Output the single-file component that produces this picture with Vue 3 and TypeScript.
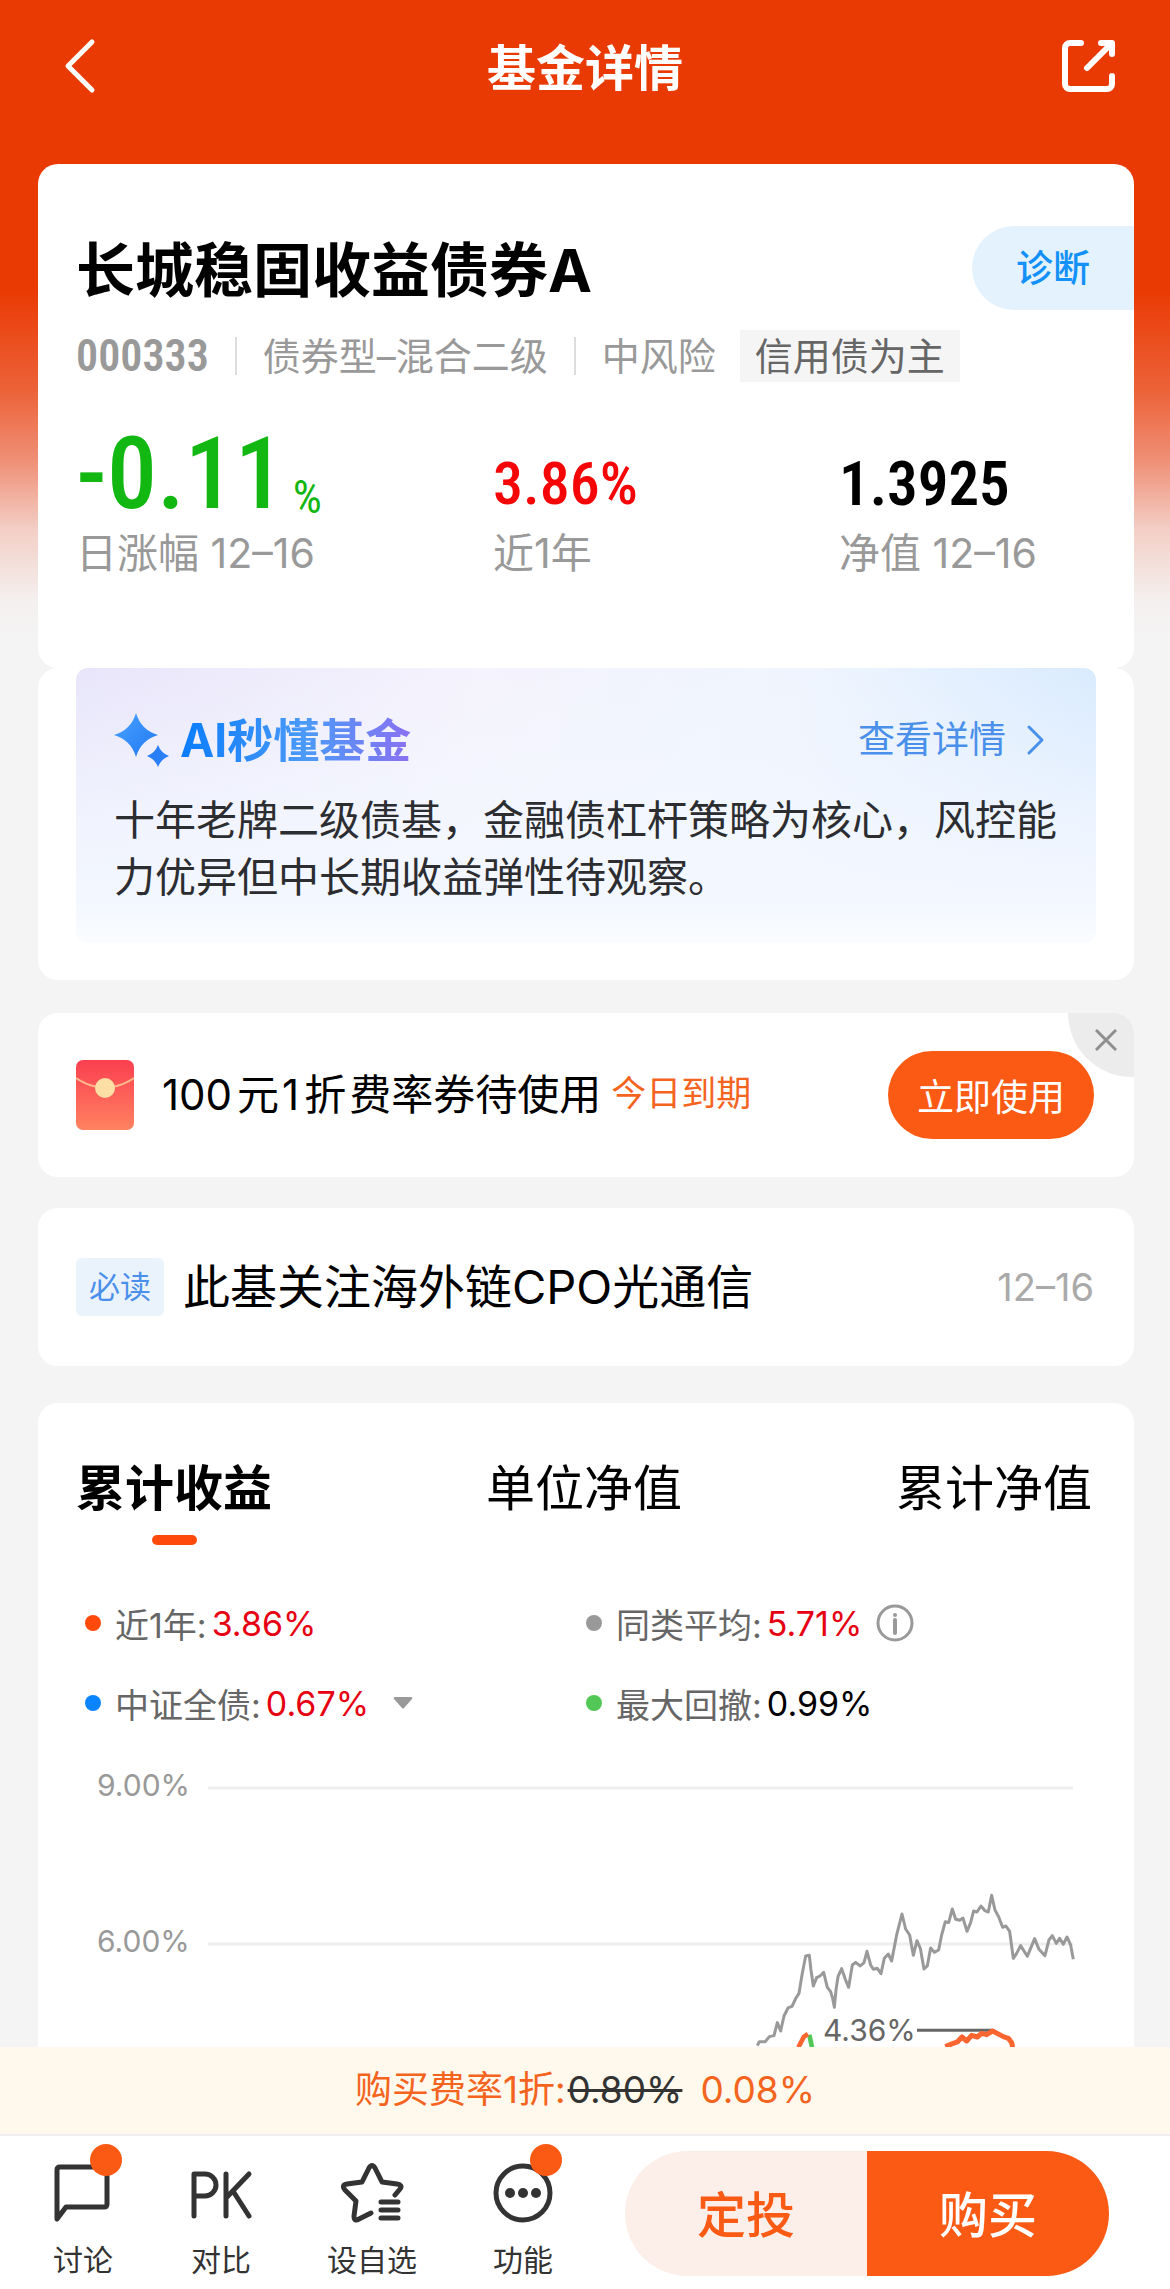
<script setup lang="ts">
import { ref } from 'vue'

interface Stat { value: string; unit?: string; label: string; tone: string }
interface Tool { id: string; label: string; badge: boolean }

const stats: Stat[] = [
  { value: '-0.11', unit: '%', label: '日涨幅 12–16', tone: 'down' },
  { value: '3.86%', label: '近1年', tone: 'up' },
  { value: '1.3925', label: '净值 12–16', tone: 'flat' },
]

const tabs = ['累计收益', '单位净值', '累计净值']
const active = ref(0)
const couponOpen = ref(true)

const tools: Tool[] = [
  { id: 'chat', label: '讨论', badge: true },
  { id: 'pk', label: '对比', badge: false },
  { id: 'star', label: '设自选', badge: false },
  { id: 'more', label: '功能', badge: true },
]

const average =
  '172,557 178,545 196,545 208,530 222,527 232,488 242,513 252,468 264,444 276,439 288,414 297,400 306,345 317,288 328,286 333,330 340,378 350,353 360,348 371,337 382,382 392,395 398,415 403,442 408,390 414,350 425,326 436,358 446,382 457,315 467,307 481,318 492,308 501,274 512,315 520,328 532,325 543,341 553,295 565,282 575,303 590,225 606,162 617,207 629,225 640,286 651,242 661,265 672,327 682,318 692,264 703,277 716,270 725,225 736,185 746,188 757,147 767,178 779,181 789,174 801,214 812,188 821,153 831,156 843,138 855,152 865,156 875,106 885,150 896,170 908,202 918,198 929,214 940,295 950,280 962,257 982,289 1004,236 1017,268 1035,287 1047,240 1057,227 1069,250 1079,235 1090,253 1101,231 1112,255 1120,298'
const fund =
  '736,560 760,550 772,546 786,531 800,543 815,526 832,531 845,520 860,524 878,513 893,521 910,530 925,535 935,548 938,562'
</script>

<template>
  <div class="page">
    <header class="top">
      <button class="icon-btn" aria-label="返回">
        <svg width="56" height="56" viewBox="0 0 56 56"><path d="M40 4 16 28l24 24" fill="none" stroke="#fff" stroke-width="5" stroke-linecap="round" stroke-linejoin="round" /></svg>
      </button>
      <h1>基金详情</h1>
      <button class="icon-btn" aria-label="分享">
        <svg width="56" height="56" viewBox="0 0 56 56" fill="none" stroke="#fff" stroke-width="6" stroke-linecap="round" stroke-linejoin="round"><path d="M19 5H8a5 5 0 0 0-5 5v36a5 5 0 0 0 5 5h37a5 5 0 0 0 5-5v-8M39 5h11v11M49 6 25 30" /></svg>
      </button>
    </header>

    <main>
      <section class="card hero">
        <div class="title-row">
          <h2>长城稳固收益债券A</h2>
          <button class="diagnose">诊断</button>
        </div>
        <div class="meta">
          <span class="code">000333</span><i></i><span>债券型–混合二级</span><i></i><span>中风险</span><span class="tag">信用债为主</span>
        </div>
        <div class="stats">
          <div v-for="s in stats" :key="s.label" :class="['stat', s.tone]">
            <p class="num">{{ s.value }}<small v-if="s.unit">{{ s.unit }}</small></p>
            <p class="cap">{{ s.label }}</p>
          </div>
        </div>
      </section>

      <section class="card ai">
        <div class="ai-box">
          <div class="ai-head">
            <svg width="56" height="56" viewBox="0 0 56 56">
              <defs><linearGradient id="spark" x1="0" y1="0" x2="1" y2="1"><stop offset="0" stop-color="#4aa3ff" /><stop offset="1" stop-color="#2077f5" /></linearGradient></defs>
              <path d="M22 1Q27 18 44 23 27 28 22 45 17 28 0 23 17 18 22 1Z" fill="url(#spark)" />
              <path d="M44 33q3 8 11 11-8 3-11 11-3-8-11-11 8-3 11-11Z" fill="#2a7ff6" />
            </svg>
            <h3>AI秒懂基金</h3>
            <a href="#detail">查看详情<svg width="20" height="32" viewBox="0 0 20 32"><path d="m3 3 13 13L3 29" fill="none" stroke="#4a90ea" stroke-width="3" stroke-linecap="round" stroke-linejoin="round" /></svg></a>
          </div>
          <p>十年老牌二级债基，金融债杠杆策略为核心，风控能力优异但中长期收益弹性待观察。</p>
        </div>
      </section>

      <section v-if="couponOpen" class="card coupon">
        <svg width="58" height="70" viewBox="0 0 58 70">
          <defs><linearGradient id="env" x1="0" y1="0" x2="0" y2="1"><stop offset="0" stop-color="#fb3f50" /><stop offset="1" stop-color="#ff8261" /></linearGradient></defs>
          <rect width="58" height="70" rx="7" fill="url(#env)" />
          <path d="M0 18q10 7 22 9h14q12-2 22-9" fill="none" stroke="#fdb98b" stroke-width="2" />
          <circle cx="29" cy="28" r="10" fill="#fddfa5" />
        </svg>
        <p>100<b>元</b>1<b>折</b>费率券待使用</p>
        <em>今日到期</em>
        <button class="use">立即使用</button>
        <button class="close" aria-label="关闭" @click="couponOpen = false">
          <svg width="22" height="22" viewBox="0 0 22 22"><path d="m1 1 20 20M21 1 1 21" stroke="#8f8f8f" stroke-width="3" /></svg>
        </button>
      </section>

      <section class="card notice">
        <span class="must">必读</span>
        <a href="#notice">此基关注海外链CPO光通信</a>
        <time>12–16</time>
      </section>

      <section class="card chart">
        <nav class="tabs">
          <button v-for="(t, n) in tabs" :key="t" :class="{ on: n === active }" @click="active = n">{{ t }}</button>
        </nav>
        <div class="legend">
          <div class="item"><i class="d-orange"></i>近1年:<b>3.86%</b></div>
          <div class="item"><i class="d-gray"></i>同类平均:<b>5.71%</b>
            <svg class="info" width="38" height="38" viewBox="0 0 38 38"><circle cx="19" cy="19" r="17" fill="none" stroke="#999" stroke-width="3" /><circle cx="19" cy="11" r="2" fill="#999" /><path d="M19 16v13" stroke="#999" stroke-width="4" stroke-linecap="round" /></svg>
          </div>
          <div class="item"><i class="d-blue"></i>中证全债:<b>0.67%</b>
            <svg class="caret" width="20" height="14" viewBox="0 0 20 14"><path d="M2 1h16q2 0 1 2l-8 9q-1 1-2 0L1 3Q0 1 2 1Z" fill="#999" /></svg>
          </div>
          <div class="item"><i class="d-green"></i>最大回撤:<b class="black">0.99%</b></div>
        </div>
        <svg class="plot" viewBox="0 0 1020 282">
          <g stroke="#eee" stroke-width="3"><path d="M132 23H997M132 179H997" /></g>
          <g class="axis"><text x="21" y="31">9.00%</text><text x="21" y="187">6.00%</text></g>
          <g transform="translate(624 95) scale(.3333)" fill="none" stroke-linejoin="round">
            <polyline :points="average" stroke="#999" stroke-width="9" />
            <path d="M328 524 336 562" stroke="#52c755" stroke-width="14" />
            <path d="M295 562 312 530 324 522" stroke="#fb6530" stroke-width="14" />
            <path d="M651 511H878" stroke="#666" stroke-width="9" />
            <polyline :points="fund" stroke="#fb6530" stroke-width="15" />
          </g>
          <text class="peak" x="747" y="276">4.36%</text>
        </svg>
      </section>
    </main>

    <footer>
      <p class="fee">购买费率1折:<del>0.80%</del><span>0.08%</span></p>
      <div class="bar">
        <div class="tools">
          <button v-for="t in tools" :key="t.id" :class="['tool', t.id]">
            <span class="glyph">
              <svg width="64" height="72" viewBox="0 0 64 72" fill="none" stroke="#333" stroke-width="5" stroke-linecap="round" stroke-linejoin="round">
                <path v-if="t.id === 'chat'" d="M6 60V11q0-3 3-3h44q3 0 3 3v34q0 3-3 3H15L6 60Z" />
                <path v-else-if="t.id === 'pk'" d="M5 57V15h11a11 11 0 0 1 0 22H5M37 15v42M60 15 38 38M44 32 60 57" />
                <g v-else-if="t.id === 'star'">
                  <path d="M55 36 60 30Q63 26 57 25L42 23 35 9Q32 4 29 9L22 23 7 25Q1 26 5 31L16 42 14 57Q14 63 19 60L31 54" />
                  <path d="M41 43h17M41 51h17M41 59h17" />
                </g>
                <g v-else><circle cx="32" cy="34" r="27" /><g fill="#333" stroke="none"><circle cx="19" cy="34" r="5" /><circle cx="32" cy="34" r="5" /><circle cx="45" cy="34" r="5" /></g></g>
              </svg>
              <i v-if="t.badge"></i>
            </span>
            {{ t.label }}
          </button>
        </div>
        <div class="actions">
          <button class="plan">定投</button>
          <button class="buy">购买</button>
        </div>
      </div>
    </footer>
  </div>
</template>

<style>
body { margin: 0; background: #f4f4f4; }
</style>

<style scoped>
* { box-sizing: border-box; }
.page {
  min-height: 100vh;
  font-family: Inter, "Noto Sans CJK SC", sans-serif;
  color: #000;
  background: linear-gradient(#ea3a04 0, #ea3a04 290px, #ec6238 390px, #ef8f76 460px, #f3cfc6 530px, #f4f0ef 600px, #f4f4f4 640px) no-repeat #f4f4f4;
  display: flex;
  flex-direction: column;
}
h1, h2, h3, p { margin: 0; font-weight: 400; }
button { border: 0; padding: 0; margin: 0; background: none; font: inherit; color: inherit; }
a { color: inherit; text-decoration: none; }
svg { display: block; flex: none; }
i, em { font-style: normal; }

.top { height: 132px; margin-bottom: 32px; padding: 0 52px; display: flex; align-items: center; justify-content: space-between; }
h1 { padding-top: 6px; font-size: 49px; line-height: 72px; font-weight: 700; color: #fff; }

main { padding: 0 36px 0 38px; flex: 1; }
.card { background: #fff; border-radius: 20px; }

.hero { height: 504px; padding: 62px 0 0 38px; }
.title-row { display: flex; justify-content: space-between; }
h2 { font-size: 59px; line-height: 90px; font-weight: 700; }
.diagnose { width: 162px; height: 84px; padding-bottom: 4px; border-radius: 42px 0 0 42px; background: #e3f2fd; color: #1491f8; font-size: 37px; font-weight: 500; }
.meta { display: flex; align-items: center; height: 52px; margin-top: 14px; font-size: 38px; line-height: 52px; color: #999; }
.meta i { width: 2px; height: 38px; margin: 0 26px; background: #ddd; }
.code { font-family: "Roboto Condensed", Roboto, sans-serif; font-weight: 600; font-size: 44px; }
.tag { margin-left: 24px; padding: 0 15px; background: #f5f5f5; color: #666; }
.stats { display: grid; grid-template-columns: 417fr 346fr 295fr; margin-top: 48px; }
.num { height: 90px; display: flex; align-items: flex-end; font-family: "Roboto Condensed", "Liberation Sans Narrow", Roboto, sans-serif; font-weight: 600; font-size: 61px; line-height: 72px; }
.down .num { font-size: 100px; line-height: 92px; font-weight: 500; color: #12b712; }
.num small { font-size: 46px; line-height: 46px; font-weight: 400; margin-left: 8px; }
.up .num { color: #f50505; font-size: 60px; font-weight: 500; }
.cap { font-size: 41px; line-height: 56px; margin-top: 5px; color: #999; }

.ai { padding: 0 38px 37px; }
.ai-box { border-radius: 12px; padding: 40px 36px 36px 38px; min-height: 275px;
  background: linear-gradient(to bottom, rgba(243,247,255,0) 0, rgba(243,247,255,0.8) 60%, #f3f7ff 85%, #fafcff 100%), linear-gradient(100deg, #e8e5fa 0, #f5f3fd 38%, #eff5fe 68%, #d6e9fe 100%); }
.ai-head { display: flex; align-items: center; height: 64px; }
h3 { margin-left: 10px; font-size: 46px; line-height: 64px; font-weight: 700; color: transparent; background: linear-gradient(90deg, #0a7cfb, #4b9af8 55%, #8a70f2); background-clip: text; }
.ai-head a { margin-left: auto; margin-right: 14px; display: flex; align-items: center; gap: 20px; font-size: 37px; line-height: 52px; color: #4a90ea; }
.ai-box p { margin-top: 20px; font-size: 41px; line-height: 57px; color: #2c2d31; }

.coupon { position: relative; margin-top: 33px; height: 164px; padding: 0 40px 0 38px; display: flex; align-items: center; overflow: hidden; }
.coupon p { margin-left: 28px; font-size: 42px; line-height: 60px; }
.coupon p b { font-weight: 400; margin-left: 5px; margin-right: 3px; }
.coupon em { margin-left: 10px; padding-bottom: 4px; font-size: 35px; line-height: 52px; color: #f5641e; }
.use { margin-left: auto; width: 206px; height: 88px; border-radius: 44px; background: #fa5a14; color: #fff; font-size: 37px; }
.close { position: absolute; top: 0; right: 0; width: 66px; height: 64px; border-radius: 0 0 0 64px; background: #ececec; display: flex; align-items: center; justify-content: center; padding-left: 10px; padding-bottom: 10px; }

.notice { margin-top: 31px; height: 158px; padding: 0 40px 0 38px; display: flex; align-items: center; }
.must { width: 88px; height: 58px; border-radius: 6px; background: #eaf2fc; color: #4a90ea; font-size: 31px; line-height: 58px; text-align: center; }
.notice a { margin-left: 19px; font-size: 47px; line-height: 68px; }
.notice time { margin-left: auto; font-size: 38px; color: #aaa; }

.chart { margin-top: 37px; padding: 48px 38px 0; border-radius: 20px 20px 0 0; }
.tabs { display: flex; justify-content: space-between; padding-right: 4px; }
.tabs button { font-size: 49px; line-height: 76px; height: 94px; display: flex; flex-direction: column; align-items: center; }
.tabs .on { font-weight: 700; }
.tabs .on::after { content: ""; width: 45px; height: 10px; border-radius: 5px; background: #ff4a0c; margin-top: 8px; }
.legend { display: grid; grid-template-columns: 501px 1fr; margin-top: 38px; padding-left: 9px; }
.item { display: flex; align-items: center; height: 80px; font-size: 34px; color: #666; }
.item i { width: 16px; height: 16px; border-radius: 8px; margin-right: 14px; }
.item b { font-weight: 400; color: #e60012; margin-left: 5px; }
.item .black { color: #000; }
.d-orange { background: #ff4a0c; } .d-gray { background: #999; } .d-blue { background: #0a84ff; } .d-green { background: #52c755; }
.info { margin-left: 14px; } .caret { margin-left: 24px; }
.plot { width: 100%; margin-top: 22px; }
.plot text { font-size: 30px; fill: #999; }
.plot .peak { fill: #666; }

.fee { height: 87px; background: #fef9ec; color: #f5641e; font-size: 37px; line-height: 86px; text-align: center; }
.fee del { color: #333; margin-left: 2px; }
.fee span { margin-left: 18px; }
.bar { height: 155px; background: #fff; border-top: 2px solid #eee; display: flex; padding: 15px 61px 0 51px; justify-content: space-between; }
.tools { display: flex; justify-content: space-between; width: 504px; }
.tool { font-size: 30px; line-height: 42px; color: #333; display: flex; flex-direction: column; align-items: center; height: 130px; }
.glyph { position: relative; height: 88px; padding-top: 8px; }
.glyph i { position: absolute; top: -7px; right: -7px; width: 32px; height: 32px; border-radius: 16px; background: #fa5a14; }
.actions { display: flex; width: 484px; height: 125px; border-radius: 63px; overflow: hidden; font-size: 49px; font-weight: 500; }
.actions button { flex: 1; padding-bottom: 4px; }
.plan { background: #fceee8; color: #fa5a14; }
.buy { background: #fa5a14; color: #fff; }
.actions .plan { background: #fceee8; color: #fa5a14; }
.actions .buy { background: #fa5a14; color: #fff; }
</style>
